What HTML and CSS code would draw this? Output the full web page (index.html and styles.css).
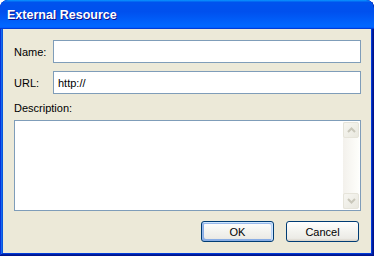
FILE: index.html
```html
<!DOCTYPE html>
<html lang="en">
<head>
    <meta charset="UTF-8">
    <meta name="viewport" content="width=device-width, initial-scale=1.0">
    <title>External Resource</title>
    <link rel="stylesheet" href="styles.css">
</head>
<body>

    <div class="window">
        <div class="title-bar">External Resource</div>
        <div class="dialog-body">
            <div class="row">
                <label class="label" for="name">Name:</label>
                <input class="field" type="text" id="name">
            </div>
            <div class="row">
                <label class="label" for="url">URL:</label>
                <input class="field" type="text" id="url" value="http://">
            </div>
            <div class="desc-label">Description:</div>
            <div class="desc-box">
                <div class="desc-text"></div>
                <div class="scrollbar">
                    <div class="scroll-btn">
                        <svg width="9" height="6" viewBox="0 0 9 6"><path d="M1 5 L4.5 1.5 L8 5" fill="none" stroke="#c9c7ba" stroke-width="2"/></svg>
                    </div>
                    <div class="scroll-track"></div>
                    <div class="scroll-btn">
                        <svg width="9" height="6" viewBox="0 0 9 6"><path d="M1 1 L4.5 4.5 L8 1" fill="none" stroke="#c9c7ba" stroke-width="2"/></svg>
                    </div>
                </div>
            </div>
            <div class="buttons">
                <button class="btn default">OK</button>
                <button class="btn">Cancel</button>
            </div>
        </div>
    </div>

</body>
</html>
```

FILE: styles.css
```css
body {
    margin: 0;
    background-color: #ffffff;
    font-family: "Liberation Sans", Arial, sans-serif;
    font-size: 11px;
    color: #000000;
}

.window {
    width: 374px;
    height: 256px;
    box-sizing: border-box;
    background-color: #ece9d8;
    border-radius: 8px 8px 0 0;
    overflow: hidden;
    display: flex;
    flex-direction: column;
    box-shadow: inset -1px -1px #00138c, inset 1px 1px #0831d9,
                inset -2px -2px #001ea0, inset 2px 2px #166aee,
                inset -3px -3px #003bda, inset 3px 3px #0855dd;
}

.title-bar {
    height: 29px;
    flex-shrink: 0;
    box-sizing: border-box;
    padding: 8px 0 0 7px;
    color: #ffffff;
    font-size: 12.5px;
    font-weight: bold;
    text-shadow: 1px 1px #0f1089;
    background: linear-gradient(180deg, #0997ff, #0053ee 8%, #0050ee 40%, #0066ff 88%, #0066ff 93%, #005bff 95%, #003dd7 96%, #003dd7);
    border-radius: 8px 8px 0 0;
}

.dialog-body {
    flex: 1;
    padding: 11px 13px 0 14px;
    display: flex;
    flex-direction: column;
}

.row {
    display: flex;
    align-items: center;
    height: 23px;
    margin-bottom: 8px;
}

.label {
    width: 39px;
    flex-shrink: 0;
}

.field {
    flex: 1;
    height: 23px;
    box-sizing: border-box;
    border: 1px solid #7f9db9;
    padding: 0 4px;
    margin: 0;
    font-family: inherit;
    font-size: 11px;
    background: #ffffff;
    outline: none;
}

.desc-label {
    height: 13px;
    line-height: 13px;
    margin-bottom: 5px;
}

.desc-box {
    height: 91px;
    box-sizing: border-box;
    border: 1px solid #7f9db9;
    background: #ffffff;
    display: flex;
}

.desc-text {
    flex: 1;
}

.scrollbar {
    width: 16px;
    margin: 1px 1px 1px 0;
    display: flex;
    flex-direction: column;
    background: linear-gradient(90deg, #f3f1ec, #fefefb);
}

.scroll-btn {
    height: 16px;
    box-sizing: border-box;
    border: 1px solid #e6e4da;
    border-radius: 2px;
    background: linear-gradient(135deg, #f7f6f1, #e9e8df);
    display: flex;
    align-items: center;
    justify-content: center;
}

.scroll-track {
    flex: 1;
}

.buttons {
    display: flex;
    justify-content: flex-end;
    gap: 12px;
    margin-top: 10px;
    padding-right: 2px;
}

.btn {
    width: 73px;
    height: 21px;
    box-sizing: border-box;
    border: 1px solid #003c74;
    border-radius: 3px;
    padding: 0;
    font-family: inherit;
    font-size: 11px;
    color: #000000;
    background: linear-gradient(180deg, #ffffff, #f3f3ef 50%, #ecebe6 86%, #d6d0c5);
}

.btn.default {
    box-shadow: inset -1px 1px #cee7ff, inset 1px 2px #98b8ea,
                inset -2px 2px #bcd4f6, inset 1px -1px #89ade4,
                inset 2px -2px #89ade4;
}
```
